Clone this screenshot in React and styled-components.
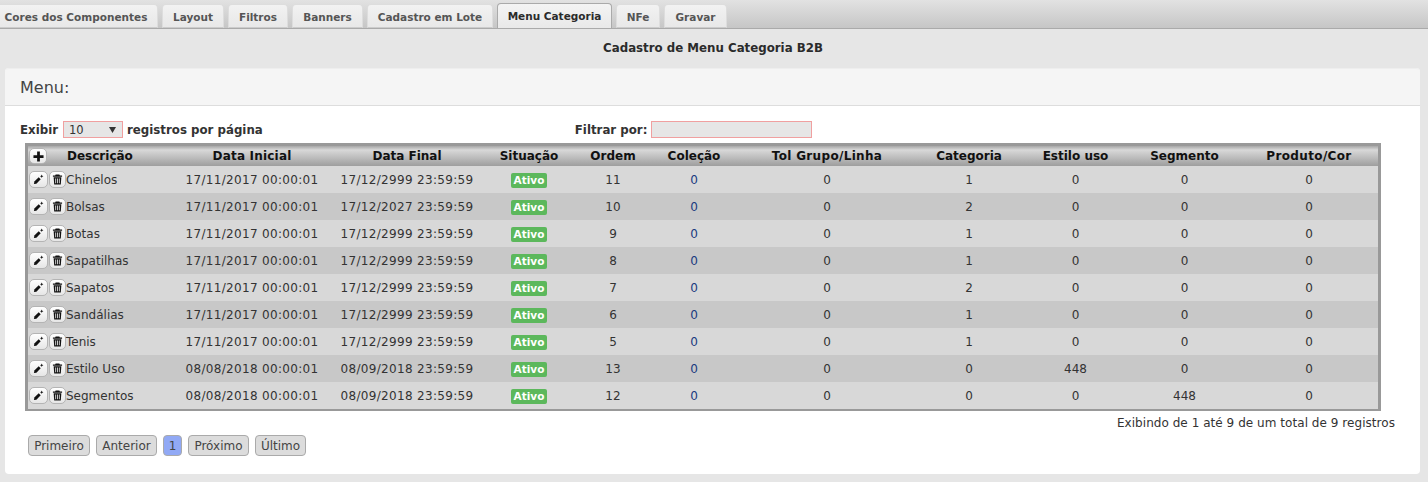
import React from 'react';
import styled, { createGlobalStyle } from 'styled-components';

const GlobalStyle = createGlobalStyle`
  html, body { margin: 0; padding: 0; background: #e6e6e6; }
  body { font-family: "DejaVu Sans", Verdana, sans-serif; font-size: 12px; color: #333; width: 1428px; height: 482px; overflow: hidden; }
`;

const TabBar = styled.div`
  display: flex;
  align-items: flex-start;
  height: 28px;
  box-sizing: content-box;
  border-bottom: 1px solid #aaa;
  background: linear-gradient(#e2e2e2, #c6c6c6);
  overflow: hidden;
`;

const Tab = styled.div`
  box-sizing: border-box;
  flex-shrink: 0;
  width: ${p => p.$w}px;
  margin-left: ${p => p.$offset || 0}px;
  margin-right: ${p => p.$gap}px;
  margin-top: ${p => (p.$active ? 3 : 4)}px;
  height: ${p => (p.$active ? 26 : 24)}px;
  border: 1px solid ${p => (p.$active ? '#aaa' : '#ddd')};
  border-bottom: ${p => (p.$active ? 'none' : '1px solid #ccc')};
  border-radius: 4px 4px 0 0;
  background: ${p => (p.$active ? 'linear-gradient(#f4f4f4, #e8e8e8)' : 'linear-gradient(#f2f2f2, #e8e8e8)')};
  color: ${p => (p.$active ? '#2b2b2b' : '#555')};
  font-size: 10.5px;
  font-weight: bold;
  line-height: 24px;
  text-align: center;
  white-space: nowrap;
`;

const PageTitle = styled.h1`
  margin: 0;
  height: 39px;
  font-size: 11.8px;
  font-weight: bold;
  color: #2b2b2b;
  line-height: 38px;
  text-align: center;
  padding-right: 2px;
`;

const Panel = styled.section`
  margin: 0 8px 0 5px;
  height: 406px;
  background: #fff;
  border-radius: 4px;
`;

const PanelHeader = styled.header`
  box-sizing: border-box;
  height: 38px;
  padding-left: 15px;
  background: #f5f5f5;
  border-top: 1px solid #eee;
  border-bottom: 1px solid #ddd;
  border-radius: 4px 4px 0 0;
  font-size: 16px;
  line-height: 37px;
  color: #444;
`;

const Controls = styled.div`
  display: flex;
  align-items: center;
  height: 17px;
  margin-top: 15px;
  padding-left: 15px;
  font-size: 11.8px;
  font-weight: bold;
  color: #333;
`;

const SelectBox = styled.div`
  box-sizing: border-box;
  display: flex;
  align-items: center;
  justify-content: space-between;
  width: 60px;
  height: 17px;
  margin: 0 4px 0 5px;
  padding: 0 6px 0 5px;
  border: 1px solid #f0a0a0;
  background: #e6e6e6;
  font-size: 11.5px;
  font-weight: normal;
`;

const Caret = styled.svg`
  width: 7px;
  height: 6px;
  fill: #333;
`;

const FilterGroup = styled.label`
  display: flex;
  align-items: center;
  margin-left: 312px;
`;

const FilterInput = styled.input`
  box-sizing: border-box;
  width: 161px;
  height: 17px;
  margin-left: 4px;
  padding: 0;
  border: 1px solid #f0a0a0;
  background: #e6e6e6;
`;

const Table = styled.table`
  box-sizing: border-box;
  width: 1356px;
  margin: 5px 0 0 20px;
  table-layout: fixed;
  border-collapse: separate;
  border-spacing: 0;
  border-top: 3px solid #999;
  border-bottom: 2px solid #999;
  border-left: 3px solid #999;
  border-right: 3px solid #999;
`;

const HeadRow = styled.tr`
  height: 20px;
  background: linear-gradient(#a6a6a6, #d8d8d8 20%, #9e9e9e);
`;

const Th = styled.th`
  padding: 0;
  font-size: 12px;
  font-weight: bold;
  color: #111;
  letter-spacing: ${p => p.$spacing || 0}px;
  text-align: center;
  white-space: nowrap;
`;

const HeadCellInner = styled.div`
  display: flex;
  align-items: center;
`;

const HeadLabel = styled.span`
  margin-left: 20px;
`;

const Row = styled.tr`
  height: 27px;
  background: ${p => (p.$even ? '#c8c8c8' : '#d8d8d8')};
`;

const Td = styled.td`
  padding: 0;
  font-size: 12px;
  color: ${p => (p.$link ? '#1a3a80' : '#333')};
  letter-spacing: ${p => (p.$date ? '0.31px' : '0')};
  text-align: center;
  white-space: nowrap;
`;

const NameCell = styled.div`
  display: flex;
  align-items: center;
  padding-left: 1px;
  text-align: left;
`;

const IconButton = styled.button`
  box-sizing: border-box;
  display: flex;
  align-items: center;
  justify-content: center;
  flex-shrink: 0;
  width: ${p => p.$w}px;
  height: ${p => (p.$plus ? 16 : 17)}px;
  margin-left: ${p => p.$ml || 0}px;
  padding: 0;
  border: 1px solid #b4b4b4;
  border-radius: 5px;
  background: linear-gradient(#fff, #e6e6e6);
`;

const Icon = styled.svg`
  width: 11px;
  height: 11px;
  fill: #111;
`;

const Badge = styled.span`
  display: inline-block;
  width: 36px;
  height: 15px;
  margin-top: 2px;
  border-radius: 2px;
  background: #5cb85c;
  color: #fff;
  font-size: 10.5px;
  font-weight: bold;
  line-height: 15px;
  text-align: center;
  vertical-align: middle;
`;

const Info = styled.div`
  height: 20px;
  margin-top: 4px;
  padding-right: 25px;
  letter-spacing: 0.045px;
  line-height: 17px;
  text-align: right;
  color: #333;
`;

const Pager = styled.nav`
  display: flex;
  gap: 6px;
  margin: 0 0 0 23px;
`;

const PageButton = styled.button`
  box-sizing: border-box;
  width: ${p => p.$w}px;
  height: 21px;
  padding: 0;
  border: 1px solid #aaa;
  border-radius: 4px;
  background: ${p => (p.$active ? '#91a9f5' : '#dcdcdc')};
  color: #444;
  font-family: inherit;
  font-size: 12px;
`;

const tabs = [
  ['Cores dos Componentes', 164, 4, false, -6],
  ['Layout', 62, 4],
  ['Filtros', 60, 4],
  ['Banners', 71, 4],
  ['Cadastro em Lote', 126, 4],
  ['Menu Categoria', 115, 4, true],
  ['NFe', 44, 4],
  ['Gravar', 63, 0],
];

const columns = [
  ['Descrição', 144],
  ['Data Inicial', 160, 0.2],
  ['Data Final', 150],
  ['Situação', 94],
  ['Ordem', 74],
  ['Coleção', 88],
  ['Tol Grupo/Linha', 178, 0.33],
  ['Categoria', 106],
  ['Estilo uso', 107],
  ['Segmento', 111],
  ['Produto/Cor', 138, 0.35],
];

const rows = [
  ['Chinelos', '17/11/2017 00:00:01', '17/12/2999 23:59:59', 11, 0, 0, 1, 0, 0, 0],
  ['Bolsas', '17/11/2017 00:00:01', '17/12/2027 23:59:59', 10, 0, 0, 2, 0, 0, 0],
  ['Botas', '17/11/2017 00:00:01', '17/12/2999 23:59:59', 9, 0, 0, 1, 0, 0, 0],
  ['Sapatilhas', '17/11/2017 00:00:01', '17/12/2999 23:59:59', 8, 0, 0, 1, 0, 0, 0],
  ['Sapatos', '17/11/2017 00:00:01', '17/12/2999 23:59:59', 7, 0, 0, 2, 0, 0, 0],
  ['Sandálias', '17/11/2017 00:00:01', '17/12/2999 23:59:59', 6, 0, 0, 1, 0, 0, 0],
  ['Tenis', '17/11/2017 00:00:01', '17/12/2999 23:59:59', 5, 0, 0, 1, 0, 0, 0],
  ['Estilo Uso', '08/08/2018 00:00:01', '08/09/2018 23:59:59', 13, 0, 0, 0, 448, 0, 0],
  ['Segmentos', '08/08/2018 00:00:01', '08/09/2018 23:59:59', 12, 0, 0, 0, 0, 448, 0],
];

const pages = [
  ['Primeiro', 62],
  ['Anterior', 61],
  ['1', 19, true],
  ['Próximo', 61],
  ['Último', 51],
];

const PlusIcon = () => (
  <Icon viewBox="0 0 12 12"><path d="M4.500 0.500h3v4h4v3h-4v4h-3v-4h-4v-3h4z" /></Icon>
);

const PencilIcon = () => (
  <Icon viewBox="0 0 12 12">
    <path d="M1 11l0.500-2.700 4.700-4.700 2.200 2.200-4.700 4.700z" />
    <path d="M9.500 0.600l0.600 1.300 1.300 0.600-1.300 0.600-0.600 1.300-0.600-1.300-1.300-0.600 1.300-0.600z" />
  </Icon>
);

const TrashIcon = () => (
  <Icon viewBox="0 0 12 12">
    <path d="M4 0.500h4l0.600 1.200h2.400v1.300h-10v-1.300h2.400z" />
    <path fillRule="evenodd" d="M1.800 3.600h8.400l-0.600 7.900h-7.200zM3.600 5v5h0.900v-5zM5.550 5v5h0.900v-5zM7.500 5v5h0.900v-5z" />
  </Icon>
);

const App = () => (
  <>
    <GlobalStyle />
    <TabBar>
      {tabs.map(([label, w, gap, active, offset]) => (
        <Tab key={label} $w={w} $gap={gap} $active={active} $offset={offset}>{label}</Tab>
      ))}
    </TabBar>
    <PageTitle>Cadastro de Menu Categoria B2B</PageTitle>
    <Panel>
      <PanelHeader>Menu:</PanelHeader>
      <Controls>
        Exibir
        <SelectBox>
          10
          <Caret viewBox="0 0 7 6"><path d="M0 0h7L3.500 6z" /></Caret>
        </SelectBox>
        registros por página
        <FilterGroup>
          Filtrar por:
          <FilterInput />
        </FilterGroup>
      </Controls>
      <Table>
        <colgroup>
          {columns.map(([label, w]) => <col key={label} style={{ width: w }} />)}
        </colgroup>
        <thead>
          <HeadRow>
            {columns.map(([label, , spacing], i) => (
              <Th key={label} $spacing={spacing}>
                {i === 0 ? (
                  <HeadCellInner>
                    <IconButton $plus $w={18} $ml={1}><PlusIcon /></IconButton>
                    <HeadLabel>{label}</HeadLabel>
                  </HeadCellInner>
                ) : label}
              </Th>
            ))}
          </HeadRow>
        </thead>
        <tbody>
          {rows.map(([name, start, end, order, ...rest], i) => (
            <Row key={name} $even={i % 2 === 1}>
              <Td>
                <NameCell>
                  <IconButton $w={19}><PencilIcon /></IconButton>
                  <IconButton $w={17} $ml={1}><TrashIcon /></IconButton>
                  {name}
                </NameCell>
              </Td>
              <Td $date>{start}</Td>
              <Td $date>{end}</Td>
              <Td><Badge>Ativo</Badge></Td>
              <Td>{order}</Td>
              {rest.map((value, j) => (
                <Td key={j} $link={j === 0}>{value}</Td>
              ))}
            </Row>
          ))}
        </tbody>
      </Table>
      <Info>Exibindo de 1 até 9 de um total de 9 registros</Info>
      <Pager>
        {pages.map(([label, w, active]) => (
          <PageButton key={label} $w={w} $active={active}>{label}</PageButton>
        ))}
      </Pager>
    </Panel>
  </>
);

export default App;
